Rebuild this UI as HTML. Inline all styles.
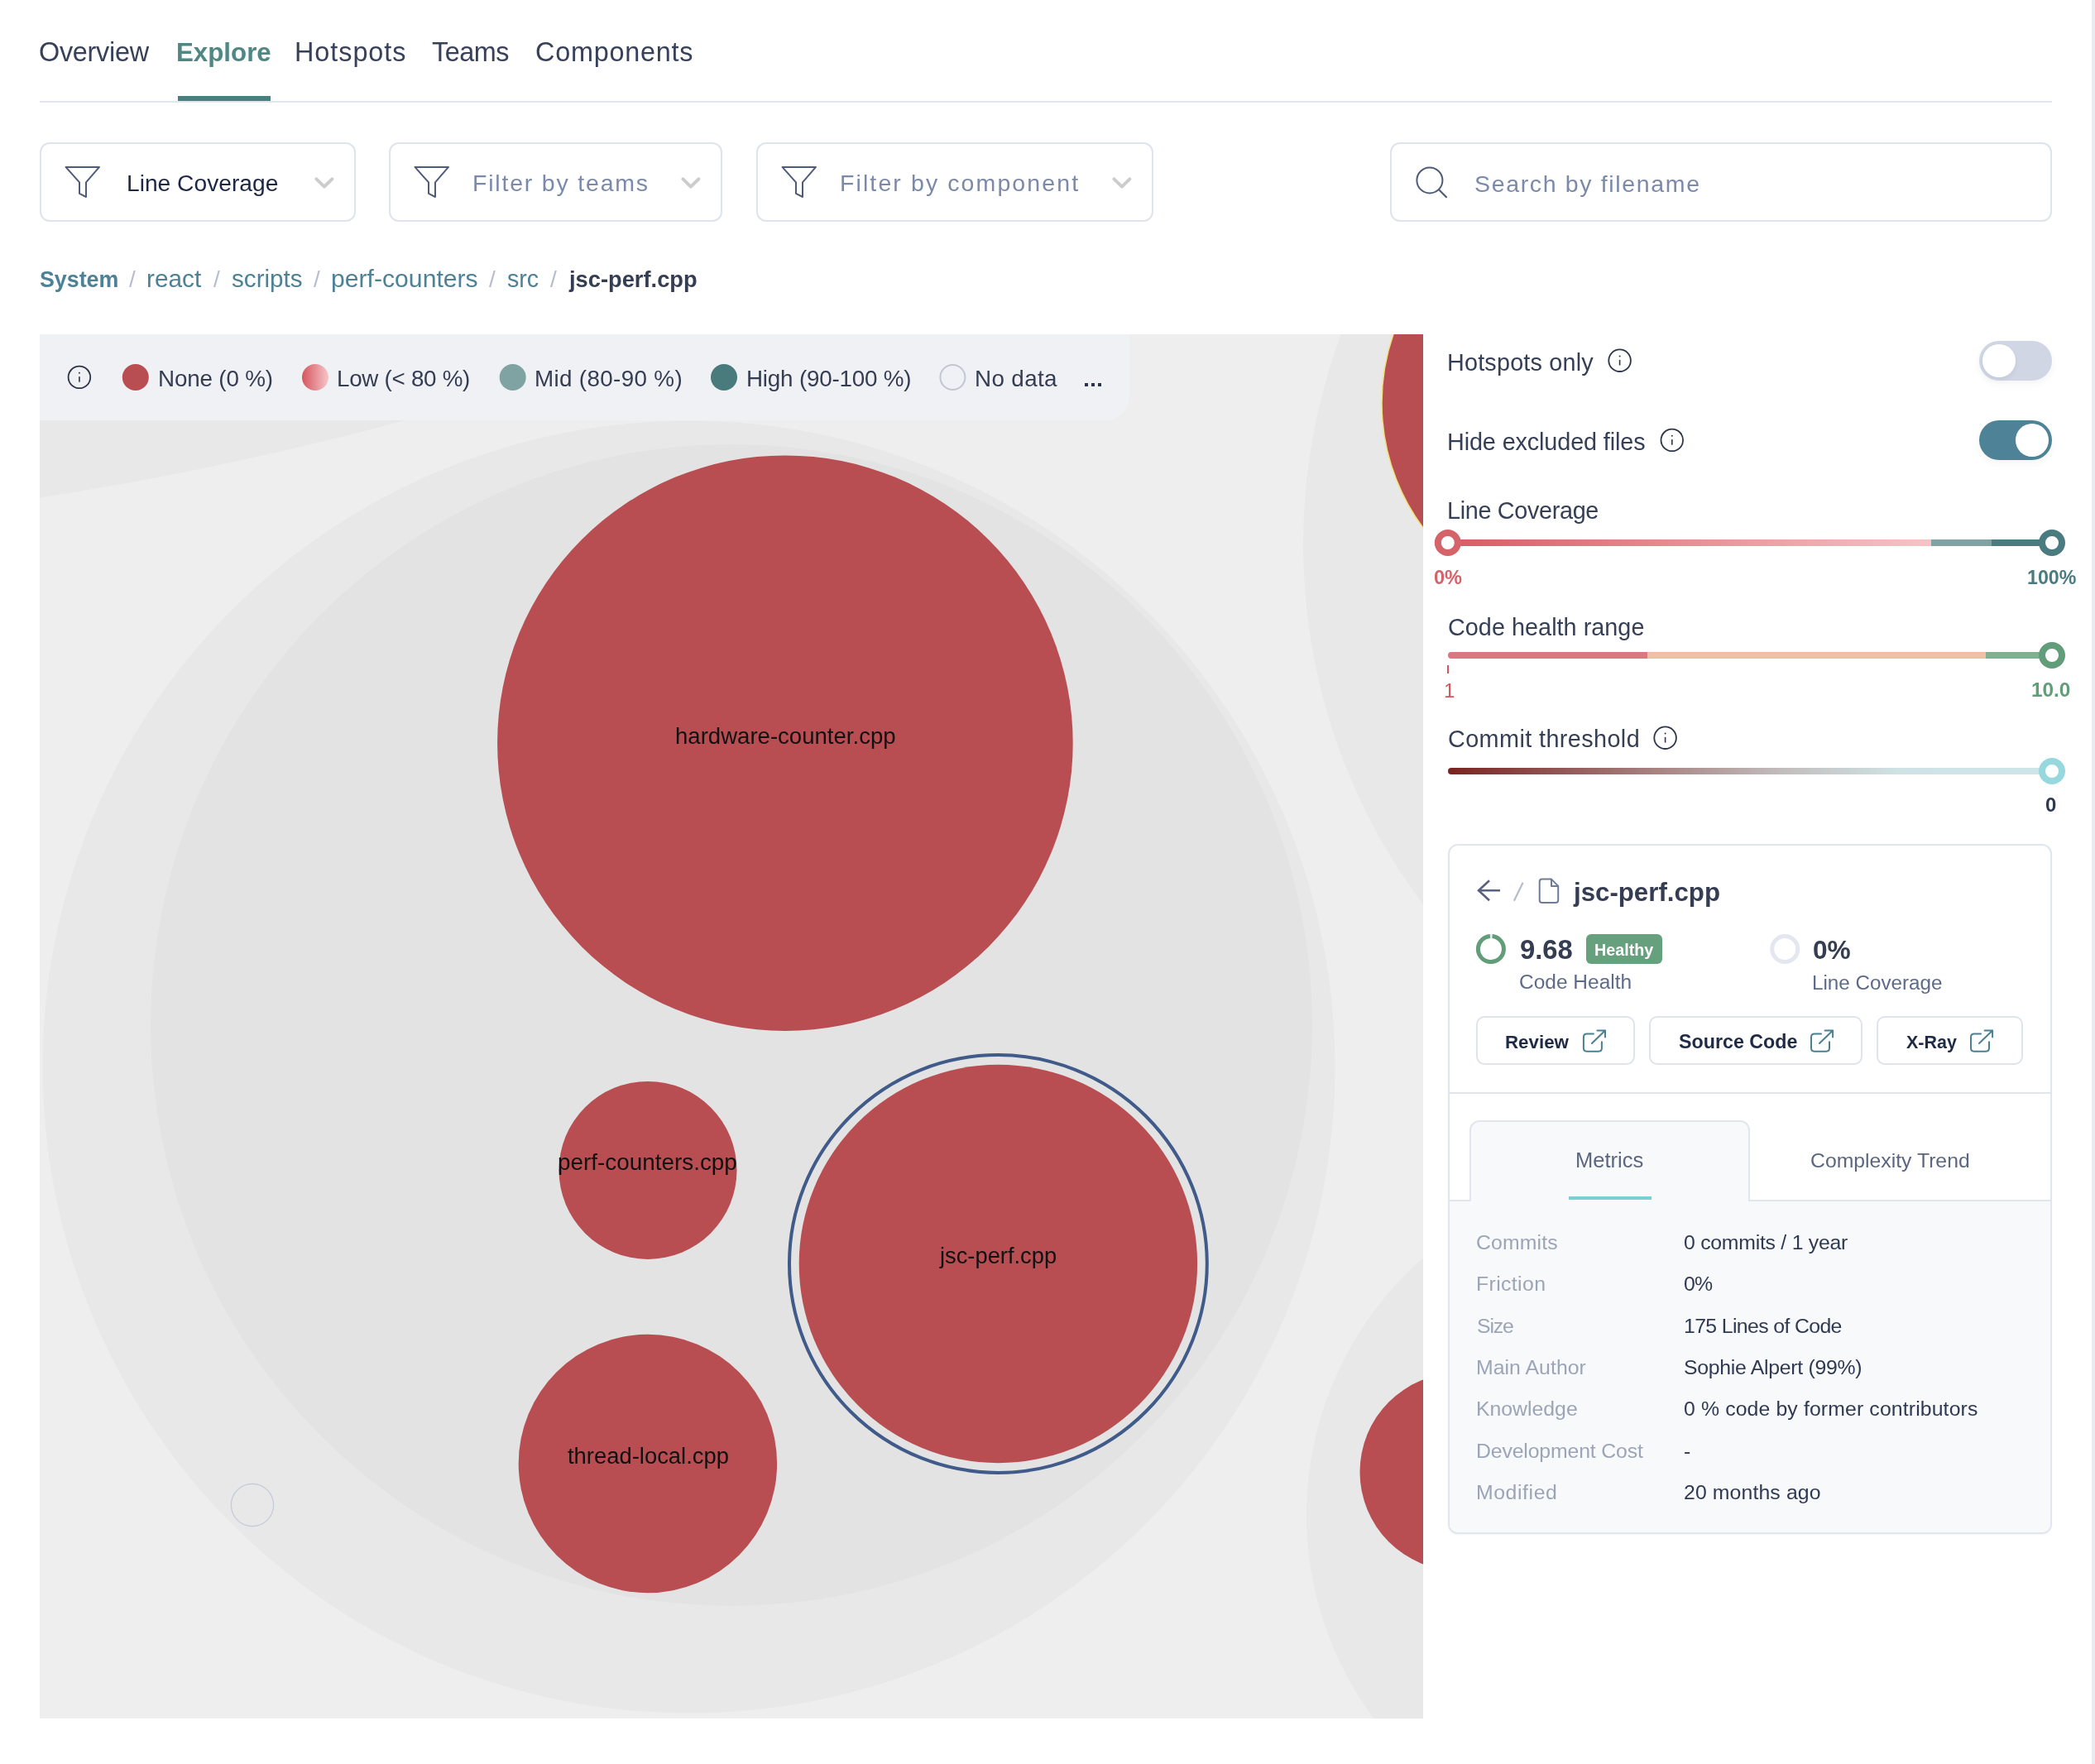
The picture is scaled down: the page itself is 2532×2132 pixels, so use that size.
<!DOCTYPE html>
<html><head><meta charset="utf-8"><style>
html,body{margin:0;padding:0;}
body{width:2532px;height:2132px;overflow:hidden;background:#ffffff;position:relative;font-family:"Liberation Sans", sans-serif;}
.t{position:absolute;white-space:pre;line-height:1.149;-webkit-font-smoothing:antialiased;will-change:transform;}
.a{position:absolute;box-sizing:border-box;}
svg{position:absolute;overflow:visible;}
</style></head>
<body>
<div class="a" style="left:48px;top:122px;width:2432px;height:2px;background:#e2e6ef"></div>
<div class="a" style="left:215px;top:116px;width:112px;height:6px;background:#4a7f80"></div>
<div class="a" style="left:48px;top:172px;width:382px;height:96px;border:2px solid #dfe3ec;border-radius:12px;background:#ffffff"></div>
<div class="a" style="left:470px;top:172px;width:403px;height:96px;border:2px solid #dfe3ec;border-radius:12px;background:#ffffff"></div>
<div class="a" style="left:914px;top:172px;width:480px;height:96px;border:2px solid #dfe3ec;border-radius:12px;background:#ffffff"></div>
<div class="a" style="left:1680px;top:172px;width:800px;height:96px;border:2px solid #dfe3ec;border-radius:12px;background:#ffffff"></div>
<svg style="left:0;top:0" width="1" height="1"><path d="M79.5,201.9 L120.0,201.9 L104.0,220.4 L104.0,238.0 L96.0,233.9 L96.0,220.4 Z" fill="none" stroke="#4f5b7a" stroke-width="2" stroke-linejoin="round"/></svg>
<svg style="left:0;top:0" width="1" height="1"><path d="M501.5,201.9 L542.0,201.9 L526.0,220.4 L526.0,238.0 L518.0,233.9 L518.0,220.4 Z" fill="none" stroke="#4f5b7a" stroke-width="2" stroke-linejoin="round"/></svg>
<svg style="left:0;top:0" width="1" height="1"><path d="M945.5,201.9 L986.0,201.9 L970.0,220.4 L970.0,238.0 L962.0,233.9 L962.0,220.4 Z" fill="none" stroke="#4f5b7a" stroke-width="2" stroke-linejoin="round"/></svg>
<svg style="left:0;top:0" width="1" height="1"><path d="M382.4,216.4 L391.9,225.6 L401.4,216.4" fill="none" stroke="#cccccc" stroke-width="4" stroke-linecap="round" stroke-linejoin="round"/></svg>
<svg style="left:0;top:0" width="1" height="1"><path d="M825.4,216.4 L834.9,225.6 L844.4,216.4" fill="none" stroke="#cccccc" stroke-width="4" stroke-linecap="round" stroke-linejoin="round"/></svg>
<svg style="left:0;top:0" width="1" height="1"><path d="M1346.4,216.4 L1355.9,225.6 L1365.4,216.4" fill="none" stroke="#cccccc" stroke-width="4" stroke-linecap="round" stroke-linejoin="round"/></svg>
<svg style="left:0;top:0" width="1" height="1"><circle cx="1727.9" cy="217.9" r="15.5" fill="none" stroke="#4f5b7a" stroke-width="2"/><path d="M1739.3,229.5 L1748,238.2" stroke="#4f5b7a" stroke-width="2.2" stroke-linecap="round"/></svg>
<div class="a" style="left:48px;top:404px;width:1672px;height:1673px;background:#eeeeee;overflow:hidden"><svg style="left:0;top:0" width="1672" height="1673"><circle cx="-626.6" cy="-3852" r="4097.7" fill="#e8e8e8" /><circle cx="2253" cy="254" r="726" fill="#e8e8e8" /><circle cx="1944" cy="1427" r="413" fill="#e8e8e8" /><circle cx="784.5" cy="885.5" r="781" fill="#e8e8e8" /><circle cx="836" cy="835" r="702" fill="#e3e3e3" /><circle cx="900.9" cy="494.20000000000005" r="347.8" fill="#b84d52" /><circle cx="735" cy="1010.4000000000001" r="107.5" fill="#b84d52" /><circle cx="1158.4" cy="1123.5" r="240.7" fill="#b84d52" /><circle cx="734.9" cy="1365" r="156.2" fill="#b84d52" /><circle cx="1875" cy="83" r="253" fill="#b84d52" stroke="#f1e27a" stroke-width="1.5"/><circle cx="1715" cy="1375" r="119.5" fill="#b84d52" /><circle cx="257" cy="1415" r="25.6" fill="#e8e8e8" stroke="#c3c9d8" stroke-width="1.2"/><circle cx="1158.4" cy="1123.5" r="252.4" fill="none" stroke="#405b8a" stroke-width="4"/></svg></div>
<div class="a" style="left:48px;top:404px;width:1317px;height:104px;background:#f0f1f5;border-bottom-right-radius:28px"></div>
<svg style="left:0;top:0" width="1" height="1"><circle cx="95.9" cy="455.9" r="13.3" fill="none" stroke="#2d3648" stroke-width="1.8"/><circle cx="95.9" cy="450.7" r="1.0" fill="#2d3648"/><rect x="95.10000000000001" y="455.09999999999997" width="1.6" height="6.6" fill="#2d3648"/></svg>
<svg style="left:0;top:0" width="1" height="1"><defs><linearGradient id="lowg" x1="0" x2="1" y1="0" y2="0"><stop offset="0" stop-color="#d6565f"/><stop offset="1" stop-color="#f5c6c8"/></linearGradient></defs><circle cx="163.8" cy="456" r="16" fill="#b84d52"/><circle cx="381" cy="456" r="16" fill="url(#lowg)"/><circle cx="619.7" cy="456" r="16" fill="#7fa3a2"/><circle cx="875" cy="456" r="16" fill="#4a7b7c"/><circle cx="1151.4" cy="456" r="15" fill="none" stroke="#c0c6d4" stroke-width="2"/><rect x="1311" y="463" width="4" height="4" fill="#2d3648"/><rect x="1319" y="463" width="4" height="4" fill="#2d3648"/><rect x="1327" y="463" width="4" height="4" fill="#2d3648"/></svg>
<svg style="left:0;top:0" width="1" height="1"><circle cx="1957.6" cy="435.7" r="13.3" fill="none" stroke="#2d3648" stroke-width="1.8"/><circle cx="1957.6" cy="430.5" r="1.0" fill="#2d3648"/><rect x="1956.8" y="434.9" width="1.6" height="6.6" fill="#2d3648"/></svg>
<svg style="left:0;top:0" width="1" height="1"><circle cx="2020.8" cy="531.9" r="13.3" fill="none" stroke="#2d3648" stroke-width="1.8"/><circle cx="2020.8" cy="526.6999999999999" r="1.0" fill="#2d3648"/><rect x="2020.0" y="531.1" width="1.6" height="6.6" fill="#2d3648"/></svg>
<svg style="left:0;top:0" width="1" height="1"><circle cx="2012.6" cy="891.7" r="13.3" fill="none" stroke="#2d3648" stroke-width="1.8"/><circle cx="2012.6" cy="886.5" r="1.0" fill="#2d3648"/><rect x="2011.8" y="890.9000000000001" width="1.6" height="6.6" fill="#2d3648"/></svg>
<div class="a" style="left:2392px;top:412px;width:88px;height:48px;border-radius:24px;background:#d0d6e4;box-shadow:0 4px 10px rgba(40,50,80,0.05)"></div>
<div class="a" style="left:2396px;top:416px;width:40px;height:40px;border-radius:20px;background:#ffffff;box-shadow:0 3px 6px rgba(0,0,0,0.06)"></div>
<div class="a" style="left:2392px;top:508px;width:88px;height:48px;border-radius:24px;background:#4e8296;box-shadow:0 4px 10px rgba(40,50,80,0.05)"></div>
<div class="a" style="left:2436px;top:512px;width:40px;height:40px;border-radius:20px;background:#ffffff"></div>
<svg style="left:0;top:0" width="1" height="1"><defs><linearGradient id="lc" x1="0" x2="1"><stop offset="0" stop-color="#d95b64"/><stop offset="1" stop-color="#f5c4c6"/></linearGradient><linearGradient id="ct" x1="0" x2="1"><stop offset="0" stop-color="#7a2320"/><stop offset="0.55" stop-color="#c2bcbc"/><stop offset="0.75" stop-color="#cfe3e5"/><stop offset="1" stop-color="#cde5e8"/></linearGradient></defs><rect x="1750" y="652" width="584" height="8" fill="url(#lc)"/><rect x="2334" y="652" width="73" height="8" fill="#7fa3a3"/><rect x="2407" y="652" width="73" height="8" fill="#4a7b7e"/><circle cx="1749.8" cy="656" r="12" fill="#ffffff" stroke="#d5636a" stroke-width="8"/><circle cx="2480" cy="656" r="12" fill="#ffffff" stroke="#4a7b7e" stroke-width="8"/><rect x="1750" y="788" width="16" height="8" rx="4" fill="#d97880"/><rect x="1754" y="788" width="237" height="8" fill="#d97880"/><rect x="1991" y="788" width="409" height="8" fill="#efbfa5"/><rect x="2400" y="788" width="80" height="8" fill="#80b090"/><rect x="1749" y="804" width="2" height="10" fill="#d5565e"/><circle cx="2480" cy="792" r="12" fill="#ffffff" stroke="#629d79" stroke-width="8"/><rect x="1750" y="928" width="730" height="8" rx="4" fill="url(#ct)"/><circle cx="2480" cy="932" r="12" fill="#ffffff" stroke="#97d8de" stroke-width="8"/></svg>
<div class="a" style="left:1750px;top:1020px;width:730px;height:834px;border:2px solid #e1e5ee;border-radius:12px;background:#ffffff;box-shadow:0 1px 2px rgba(30,40,80,0.05)"></div>
<div class="a" style="left:1752px;top:1450px;width:726px;height:402px;background:#f8f9fb;border-bottom-left-radius:10px;border-bottom-right-radius:10px"></div>
<div class="a" style="left:1752px;top:1320px;width:726px;height:2px;background:#e1e5ee"></div>
<div class="a" style="left:1752px;top:1450px;width:726px;height:2px;background:#e1e5ee"></div>
<div class="a" style="left:1776px;top:1354px;width:339px;height:98px;border:2px solid #e1e5ee;border-bottom:none;border-radius:12px 12px 0 0;background:#f8f9fb"></div>
<div class="a" style="left:1896px;top:1446px;width:100px;height:4px;background:#7ccfcf"></div>
<svg style="left:0;top:0" width="1" height="1"><path d="M1800,1064.3 L1787,1076.3 L1800,1088.2 M1787.5,1076.3 L1813,1076.3" fill="none" stroke="#56627f" stroke-width="2.6" stroke-linejoin="miter"/><path d="M1840.6,1066.7 L1829.9,1088.8" stroke="#b3bccd" stroke-width="2.2"/><path d="M1875,1062.6 L1863.7,1062.6 Q1860.7,1062.6 1860.7,1065.6 L1860.7,1088 Q1860.7,1091 1863.7,1091 L1880.2,1091 Q1883.2,1091 1883.2,1088 L1883.2,1070.9 Z M1875,1062.6 L1875,1070.9 L1883.2,1070.9" fill="none" stroke="#6f7c99" stroke-width="2" stroke-linejoin="round"/><circle cx="1801.9" cy="1147" r="15.5" fill="none" stroke="#e8eaf0" stroke-width="5"/><circle cx="1801.9" cy="1147" r="15.5" fill="none" stroke="#629d79" stroke-width="5" stroke-dasharray="93.98 97.39" transform="rotate(-83.7 1801.9 1147)"/><circle cx="2157.2" cy="1147" r="15.5" fill="none" stroke="#e4e7ef" stroke-width="5"/></svg>
<div class="a" style="left:1917px;top:1129px;width:92px;height:36px;border-radius:6px;background:#66a07c"></div>
<div class="a" style="left:1784px;top:1228px;width:192px;height:59px;border:2px solid #dfe3ec;border-radius:10px;background:#ffffff"></div>
<div class="a" style="left:1993px;top:1228px;width:258px;height:59px;border:2px solid #dfe3ec;border-radius:10px;background:#ffffff"></div>
<div class="a" style="left:2268px;top:1228px;width:177px;height:59px;border:2px solid #dfe3ec;border-radius:10px;background:#ffffff"></div>
<svg style="left:0;top:0" width="1" height="1"><path d="M1925.9,1249.5 L1917.9,1249.5 Q1913.9,1249.5 1913.9,1253.5 L1913.9,1266.7 Q1913.9,1270.7 1917.9,1270.7 L1931.9,1270.7 Q1935.9,1270.7 1935.9,1266.7 L1935.9,1259.2" fill="none" stroke="#4b7f92" stroke-width="2" stroke-linecap="round"/><path d="M1923.9,1261 L1940.0,1245.5 M1930.5,1245.5 L1940.0,1245.5 L1940.0,1253.6" fill="none" stroke="#4b7f92" stroke-width="2" stroke-linecap="round" stroke-linejoin="round"/><path d="M2201.0,1249.5 L2193.0,1249.5 Q2189.0,1249.5 2189.0,1253.5 L2189.0,1266.7 Q2189.0,1270.7 2193.0,1270.7 L2207.0,1270.7 Q2211.0,1270.7 2211.0,1266.7 L2211.0,1259.2" fill="none" stroke="#4b7f92" stroke-width="2" stroke-linecap="round"/><path d="M2199.0,1261 L2215.1,1245.5 M2205.6,1245.5 L2215.1,1245.5 L2215.1,1253.6" fill="none" stroke="#4b7f92" stroke-width="2" stroke-linecap="round" stroke-linejoin="round"/><path d="M2394.0,1249.5 L2386.0,1249.5 Q2382.0,1249.5 2382.0,1253.5 L2382.0,1266.7 Q2382.0,1270.7 2386.0,1270.7 L2400.0,1270.7 Q2404.0,1270.7 2404.0,1266.7 L2404.0,1259.2" fill="none" stroke="#4b7f92" stroke-width="2" stroke-linecap="round"/><path d="M2392.0,1261 L2408.1,1245.5 M2398.6,1245.5 L2408.1,1245.5 L2408.1,1253.6" fill="none" stroke="#4b7f92" stroke-width="2" stroke-linecap="round" stroke-linejoin="round"/></svg>
<div class="a" style="left:2528px;top:0;width:4px;height:2132px;background:#e9ebf0"></div>
<div class="t" style="left:47.48px;top:44.68px;font-size:32.40px;font-weight:400;color:#38415a;letter-spacing:-0.27px;">Overview</div>
<div class="t" style="left:213.05px;top:45.69px;font-size:31.28px;font-weight:700;color:#4e8784;">Explore</div>
<div class="t" style="left:356.47px;top:44.68px;font-size:32.40px;font-weight:400;color:#38415a;letter-spacing:0.95px;">Hotspots</div>
<div class="t" style="left:522.49px;top:44.68px;font-size:32.40px;font-weight:400;color:#38415a;letter-spacing:-0.48px;">Teams</div>
<div class="t" style="left:647.48px;top:44.68px;font-size:32.40px;font-weight:400;color:#38415a;letter-spacing:0.76px;">Components</div>
<div class="t" style="left:152.80px;top:205.49px;font-size:28.19px;font-weight:400;color:#1c2743;">Line Coverage</div>
<div class="t" style="left:570.77px;top:205.21px;font-size:28.50px;font-weight:400;color:#7b8aab;letter-spacing:1.80px;">Filter by teams</div>
<div class="t" style="left:1014.77px;top:205.21px;font-size:28.50px;font-weight:400;color:#7b8aab;letter-spacing:2.10px;">Filter by component</div>
<div class="t" style="left:1782.11px;top:206.21px;font-size:28.50px;font-weight:400;color:#7b8aab;letter-spacing:1.65px;">Search by filename</div>
<div class="t" style="left:47.88px;top:322.74px;font-size:26.80px;font-weight:700;color:#4d8296;">System</div>
<div class="t" style="left:155.80px;top:321.66px;font-size:28.00px;font-weight:400;color:#b6bcd0;">/</div>
<div class="t" style="left:177.44px;top:320.03px;font-size:29.81px;font-weight:400;color:#4d8296;">react</div>
<div class="t" style="left:258.00px;top:321.66px;font-size:28.00px;font-weight:400;color:#b6bcd0;">/</div>
<div class="t" style="left:280.24px;top:320.16px;font-size:29.66px;font-weight:400;color:#4d8296;">scripts</div>
<div class="t" style="left:378.90px;top:321.66px;font-size:28.00px;font-weight:400;color:#b6bcd0;">/</div>
<div class="t" style="left:400.11px;top:319.70px;font-size:30.17px;font-weight:400;color:#4d8296;">perf-counters</div>
<div class="t" style="left:591.00px;top:321.66px;font-size:28.00px;font-weight:400;color:#b6bcd0;">/</div>
<div class="t" style="left:612.95px;top:321.07px;font-size:28.65px;font-weight:400;color:#4d8296;">src</div>
<div class="t" style="left:664.90px;top:321.66px;font-size:28.00px;font-weight:400;color:#b6bcd0;">/</div>
<div class="t" style="left:687.63px;top:322.30px;font-size:27.29px;font-weight:700;color:#353d52;">jsc-perf.cpp</div>
<div class="t" style="left:190.63px;top:441.84px;font-size:27.80px;font-weight:400;color:#353d52;letter-spacing:-0.17px;">None (0 %)</div>
<div class="t" style="left:406.83px;top:441.84px;font-size:27.80px;font-weight:400;color:#353d52;letter-spacing:-0.29px;">Low (&lt; 80 %)</div>
<div class="t" style="left:645.83px;top:441.84px;font-size:27.80px;font-weight:400;color:#353d52;letter-spacing:0.34px;">Mid (80-90 %)</div>
<div class="t" style="left:901.83px;top:441.84px;font-size:27.80px;font-weight:400;color:#353d52;letter-spacing:-0.20px;">High (90-100 %)</div>
<div class="t" style="left:1177.83px;top:441.84px;font-size:27.80px;font-weight:400;color:#353d52;letter-spacing:0.37px;">No data</div>
<div class="t" style="left:815.58px;top:874.05px;font-size:27.57px;font-weight:400;color:#111111;">hardware-counter.cpp</div>
<div class="t" style="left:674.26px;top:1388.78px;font-size:27.87px;font-weight:400;color:#111111;">perf-counters.cpp</div>
<div class="t" style="left:1135.85px;top:1502.28px;font-size:27.31px;font-weight:400;color:#111111;">jsc-perf.cpp</div>
<div class="t" style="left:685.70px;top:1744.40px;font-size:27.41px;font-weight:400;color:#111111;">thread-local.cpp</div>
<div class="t" style="left:1748.75px;top:421.94px;font-size:28.80px;font-weight:400;color:#353f55;letter-spacing:0.18px;">Hotspots only</div>
<div class="t" style="left:1748.75px;top:517.94px;font-size:28.80px;font-weight:400;color:#353f55;letter-spacing:-0.12px;">Hide excluded files</div>
<div class="t" style="left:1748.75px;top:600.94px;font-size:28.80px;font-weight:400;color:#353f55;letter-spacing:-0.33px;">Line Coverage</div>
<div class="t" style="left:1733.26px;top:684.67px;font-size:23.57px;font-weight:700;color:#d5636a;">0%</div>
<div class="t" style="left:2449.75px;top:685.03px;font-size:23.18px;font-weight:700;color:#4a7b7e;">100%</div>
<div class="t" style="left:1749.65px;top:741.94px;font-size:28.80px;font-weight:400;color:#353f55;letter-spacing:0.03px;">Code health range</div>
<div class="t" style="left:1744.50px;top:820.58px;font-size:24.00px;font-weight:400;color:#d5565e;">1</div>
<div class="t" style="left:2455.38px;top:819.56px;font-size:24.36px;font-weight:700;color:#629d79;">10.0</div>
<div class="t" style="left:1749.65px;top:876.94px;font-size:28.80px;font-weight:400;color:#353f55;letter-spacing:0.40px;">Commit threshold</div>
<div class="t" style="left:2472.45px;top:959.28px;font-size:24.00px;font-weight:700;color:#2d3a56;">0</div>
<div class="t" style="left:1902.49px;top:1060.73px;font-size:31.23px;font-weight:700;color:#353d52;">jsc-perf.cpp</div>
<div class="t" style="left:1836.97px;top:1129.11px;font-size:32.80px;font-weight:700;color:#353d52;">9.68</div>
<div class="t" style="left:1926.57px;top:1137.13px;font-size:19.74px;font-weight:700;color:#ffffff;">Healthy</div>
<div class="t" style="left:1836.45px;top:1173.44px;font-size:24.49px;font-weight:400;color:#5e6b88;">Code Health</div>
<div class="t" style="left:2191.01px;top:1130.16px;font-size:31.65px;font-weight:700;color:#353d52;">0%</div>
<div class="t" style="left:2190.11px;top:1173.68px;font-size:24.23px;font-weight:400;color:#5e6b88;">Line Coverage</div>
<div class="t" style="left:1819.41px;top:1247.20px;font-size:22.32px;font-weight:700;color:#1f2a44;">Review</div>
<div class="t" style="left:2028.64px;top:1246.35px;font-size:23.26px;font-weight:700;color:#1f2a44;">Source Code</div>
<div class="t" style="left:2304.00px;top:1247.97px;font-size:21.47px;font-weight:700;color:#1f2a44;">X-Ray</div>
<div class="t" style="left:1904.00px;top:1387.89px;font-size:25.54px;font-weight:400;color:#5b6780;">Metrics</div>
<div class="t" style="left:2187.84px;top:1388.57px;font-size:24.78px;font-weight:400;color:#5b6780;">Complexity Trend</div>
<div class="t" style="left:1784.34px;top:1488.16px;font-size:24.80px;font-weight:400;color:#9ba5b7;letter-spacing:0.14px;">Commits</div>
<div class="t" style="left:2035.32px;top:1488.16px;font-size:24.80px;font-weight:400;color:#2f3a52;letter-spacing:-0.25px;">0 commits / 1 year</div>
<div class="t" style="left:1783.56px;top:1538.46px;font-size:24.80px;font-weight:400;color:#9ba5b7;letter-spacing:0.38px;">Friction</div>
<div class="t" style="left:2035.32px;top:1538.46px;font-size:24.80px;font-weight:400;color:#2f3a52;letter-spacing:-0.83px;">0%</div>
<div class="t" style="left:1784.72px;top:1588.76px;font-size:24.80px;font-weight:400;color:#9ba5b7;letter-spacing:-1.15px;">Size</div>
<div class="t" style="left:2034.55px;top:1588.76px;font-size:24.80px;font-weight:400;color:#2f3a52;letter-spacing:-0.62px;">175 Lines of Code</div>
<div class="t" style="left:1783.56px;top:1639.06px;font-size:24.80px;font-weight:400;color:#9ba5b7;letter-spacing:0.05px;">Main Author</div>
<div class="t" style="left:2035.32px;top:1639.06px;font-size:24.80px;font-weight:400;color:#2f3a52;letter-spacing:-0.28px;">Sophie Alpert (99%)</div>
<div class="t" style="left:1783.56px;top:1689.36px;font-size:24.80px;font-weight:400;color:#9ba5b7;letter-spacing:0.00px;">Knowledge</div>
<div class="t" style="left:2035.32px;top:1689.36px;font-size:24.80px;font-weight:400;color:#2f3a52;letter-spacing:0.13px;">0 % code by former contributors</div>
<div class="t" style="left:1783.56px;top:1739.66px;font-size:24.80px;font-weight:400;color:#9ba5b7;letter-spacing:-0.14px;">Development Cost</div>
<div class="t" style="left:2035.32px;top:1739.66px;font-size:24.80px;font-weight:400;color:#2f3a52;">-</div>
<div class="t" style="left:1783.56px;top:1789.96px;font-size:24.80px;font-weight:400;color:#9ba5b7;letter-spacing:0.58px;">Modified</div>
<div class="t" style="left:2034.94px;top:1789.96px;font-size:24.80px;font-weight:400;color:#2f3a52;letter-spacing:0.12px;">20 months ago</div>
</body></html>
